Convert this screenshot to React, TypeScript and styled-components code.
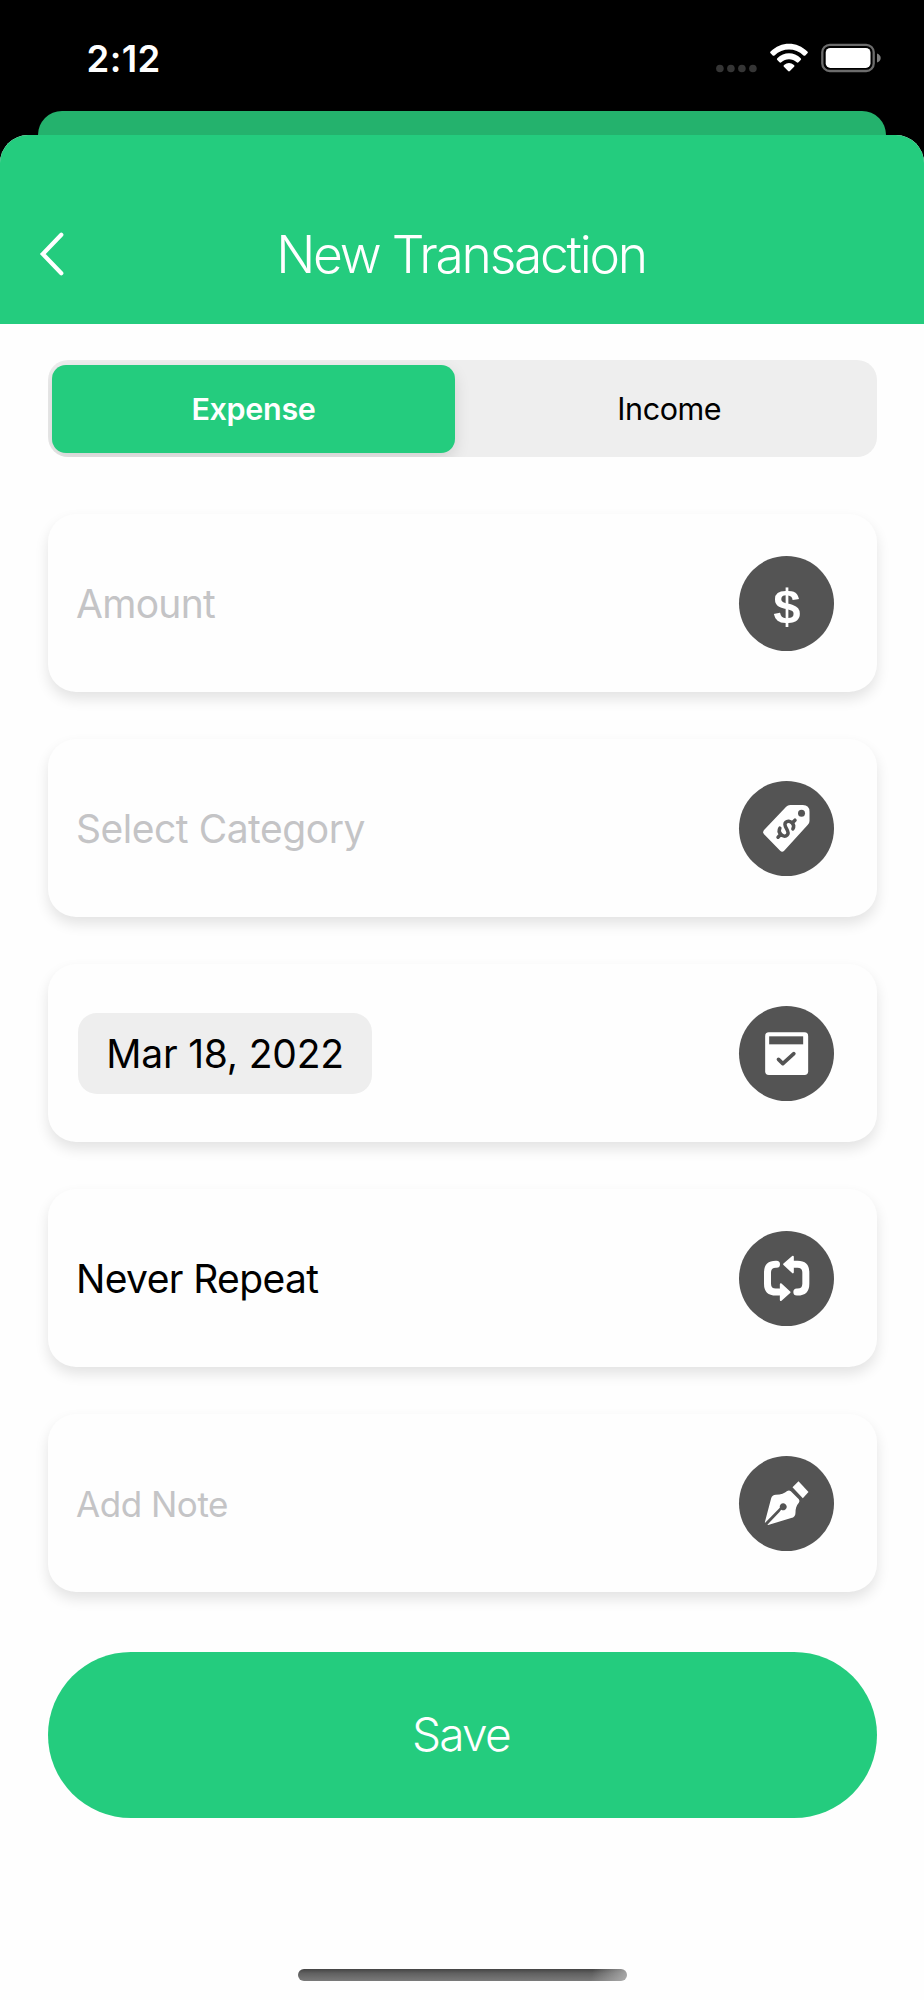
import React from "react";
import styled, { createGlobalStyle } from "styled-components";

const green = "#24cc7e";
const paper = "#fefefe";
const slate = "#545454";

const GlobalStyle = createGlobalStyle`
  *, *::before, *::after { box-sizing: border-box; }
  body { margin: 0; background: #000; }
  button { border: 0; padding: 0; background: none; color: inherit; font: inherit; }
`;

const Screen = styled.div`
  display: flex;
  flex-direction: column;
  width: 924px;
  height: 2000px;
  overflow: hidden;
  background: #000;
  font-family: Inter, "Liberation Sans", sans-serif;
  color: #000;
`;

const StatusBar = styled.div`
  display: flex;
  flex: none;
  align-items: center;
  justify-content: space-between;
  height: 111px;
  padding: 0 43px 0 86.5px;
  color: #fff;
`;

const Clock = styled.time`
  margin-top: 7px;
  font-size: 36.5px;
  font-weight: 600;
  line-height: 44px;
  letter-spacing: 0.4px;
`;

const StatusIcons = styled.div`
  display: flex;
  align-items: center;
  gap: 13px;
  margin-top: 5px;
`;

const BackSheet = styled.div`
  flex: none;
  height: 24px;
  margin: 0 38px;
  border-radius: 24px 24px 0 0;
  background: #24b26d;
`;

const Sheet = styled.main`
  display: flex;
  flex: 1;
  flex-direction: column;
  border-radius: 28px 28px 0 0;
  overflow: hidden;
  background: ${paper};
`;

const Header = styled.header`
  display: grid;
  grid-template-columns: 64px 1fr 64px;
  align-items: center;
  flex: none;
  height: 189px;
  padding: 48px 21px 0 19px;
  background: ${green};
  color: #fff;
`;

const BackButton = styled.button`
  display: flex;
  justify-content: center;
`;

const Title = styled.h1`
  margin: 0;
  font-size: 51.5px;
  font-weight: 300;
  line-height: 64px;
  letter-spacing: -2.25px;
  text-align: center;
`;

const Form = styled.form`
  display: flex;
  flex-direction: column;
  padding: 36px 47.5px 0;
`;

const Segments = styled.div`
  display: grid;
  grid-template-columns: 403px 1fr;
  column-gap: 7px;
  height: 97px;
  padding: 5px 0 4px 4.5px;
  border-radius: 20px;
  overflow: hidden;
  background: #eeeeee;
`;

const Segment = styled.button<{ $active?: boolean }>`
  padding-bottom: 2px;
  border-radius: 14px;
  background: ${(p) => (p.$active ? green : "transparent")};
  box-shadow: ${(p) => (p.$active ? "0 6px 16px rgba(0, 0, 0, 0.12)" : "none")};
  color: ${(p) => (p.$active ? "#fff" : "#000")};
  font-size: 30.5px;
  font-weight: ${(p) => (p.$active ? 600 : 400)};
  letter-spacing: ${(p) => (p.$active ? "-0.32px" : "-0.43px")};
`;

const Fields = styled.div`
  display: flex;
  flex-direction: column;
  gap: 47px;
  margin-top: 57px;
`;

const Card = styled.div`
  display: flex;
  align-items: center;
  justify-content: space-between;
  height: 178px;
  padding: 0 42.5px 0 28.5px;
  border-radius: 28px;
  background: ${paper};
  box-shadow: 0 7px 14px rgba(0, 0, 0, 0.11);
`;

const Label = styled.span<{ $muted?: boolean; $size?: number; $tracking: number }>`
  padding-top: 1px;
  color: ${(p) => (p.$muted ? "#c4c4c6" : "#000")};
  font-size: ${(p) => p.$size ?? 39}px;
  line-height: 48px;
  letter-spacing: ${(p) => p.$tracking}px;
`;

const DateChip = styled.button`
  width: 294px;
  height: 81px;
  margin: 1px 0 0 2px;
  border-radius: 19px;
  background: #eeeeee;
`;

const Badge = styled.span`
  display: flex;
  flex: none;
  align-items: center;
  justify-content: center;
  width: 95px;
  height: 95px;
  border-radius: 50%;
  background: ${slate};
  color: #fff;
`;

const Dollar = styled.span`
  padding: 5px 0 0 1px;
  font-family: "Liberation Sans", Arial, sans-serif;
  font-size: 49px;
  font-weight: 700;
  line-height: 50px;
`;

const SaveButton = styled.button`
  height: 166px;
  margin-top: 60px;
  padding: 0 2px 2px 0;
  border-radius: 83px;
  background: ${green};
  color: #fff;
  font-size: 46px;
  font-weight: 300;
  letter-spacing: -1.7px;
`;

const HomeIndicator = styled.div`
  align-self: center;
  width: 329px;
  height: 12px;
  margin-top: auto;
  margin-bottom: 19px;
  border-radius: 6px;
  background:
    linear-gradient(100deg, transparent 89%, rgba(190, 190, 190, 0.75) 100%),
    linear-gradient(#444, #606060 35%, #7a7a7a);
`;

const SignalDots = () => (
  <svg width="42" height="30" viewBox="0 0 42 30" fill="#353535">
    <circle cx="4.900" cy="25.500" r="3.800" />
    <circle cx="15.900" cy="25.500" r="3.800" />
    <circle cx="26.900" cy="25.500" r="3.800" />
    <circle cx="37.900" cy="25.500" r="3.800" />
  </svg>
);

const Wifi = () => (
  <svg width="38" height="30" viewBox="0 0 38 30" fill="#fff">
    <path d="M.6 8.5C11-2 27-2 37.4 8.5q.9.9 0 1.8L35.3 12.4q-.9.9-1.8 0C25.300 4.500 12.700 4.500 4.500 12.400q-.9.900-1.800 0L.6 10.300q-.9-.900 0-1.800Z" />
    <path d="M7.300 15.200C14 8.700 24 8.700 30.700 15.200q.9.900 0 1.800L28.500 19.200q-.9.900-1.800 0C22.400 15.100 15.600 15.100 11.300 19.200q-.9.900-1.800 0L7.300 17q-.9-.900 0-1.800Z" />
    <path d="M14 21.900Q19 18 24 21.900q1 .900.100 1.800L19.900 28.100q-.900.900-1.800 0L13.900 23.700q-.900-.900.100-1.800Z" />
  </svg>
);

const Battery = () => (
  <svg width="60" height="30" viewBox="0 0 60 30">
    <rect x="1.300" y="1.800" width="51.400" height="26.200" rx="7.500" fill="none" stroke="#6c6c6c" strokeWidth="2.300" />
    <rect x="4.700" y="4.900" width="44.800" height="20" rx="4.600" fill="#fff" />
    <path d="M56 10.500Q59.700 12 59.700 15T56 19.500Z" fill="#7d7d7d" />
  </svg>
);

const Chevron = () => (
  <svg width="26" height="44" viewBox="0 0 26 44" fill="none" stroke="#fff" strokeWidth="4.200" strokeLinecap="round">
    <path d="M23.300 2.800 4.800 22 23.300 41.200" />
  </svg>
);

const Glyph = ({ children }: { children: React.ReactNode }) => (
  <svg width="95" height="95" viewBox="27.500 33 285 285" fill="#fff">
    {children}
  </svg>
);

const TagIcon = () => (
  <Glyph>
    <path d="M181 105H219Q239 105 239 125V153Q239 159 234 164L163 242Q157 248 151 242L102 192Q97 187 102 181L169 110Q174 105 181 105Z" />
    <circle cx="215" cy="130" r="10.500" fill={slate} />
    <path
      transform="translate(170 176) rotate(45)"
      d="M14-13C12-21 7-24 0-24C-9-24-15-19-15-12C-15-4-8-2 0 0C8 2 15 5 15 12C15 20 8 24 0 24C-7 24-13 21-15 13M0-24V-36M0 24V36"
      fill="none"
      stroke={slate}
      strokeWidth="10.500"
      strokeLinecap="round"
    />
  </Glyph>
);

const CalendarIcon = () => (
  <Glyph>
    <rect x="106" y="112" width="129" height="128" rx="11" />
    <rect x="118" y="124" width="102" height="24" fill={slate} />
    <path d="M146 193 159 206 192 176" fill="none" stroke={slate} strokeWidth="11" strokeLinecap="round" strokeLinejoin="round" />
  </Glyph>
);

const RepeatIcon = () => (
  <Glyph>
    <g fill="none" stroke="#fff" strokeWidth="21" strokeLinecap="round">
      <path d="M140 133H138Q113 133 113 158V191Q113 216 138 216H148" />
      <path d="M201 216H203Q228 216 228 191V158Q228 133 203 133H193" />
    </g>
    <path d="M153 193 179 217 153 240ZM189 110 163 133 189 157Z" stroke="#fff" strokeWidth="6" strokeLinejoin="round" />
  </Glyph>
);

const PenIcon = () => (
  <Glyph>
    <path d="M106 228 124 160Q127 149 138 149C154 149 164 145 172 138Q178 134 183 139L207 163Q211 168 207 173C199 182 197 192 197 203Q197 216 184 219L115 240Q112 241 114 238L149 201 154 194A10.500 10.500 0 1 0 150 188L106 233Q104 234 106 228Z" />
    <path d="M206 109 236 141 219 160 188 127Z" />
  </Glyph>
);

export default function App() {
  return (
    <>
      <GlobalStyle />
      <Screen>
        <StatusBar>
          <Clock>2:12</Clock>
          <StatusIcons>
            <SignalDots />
            <Wifi />
            <Battery />
          </StatusIcons>
        </StatusBar>
        <BackSheet />
        <Sheet>
          <Header>
            <BackButton type="button" aria-label="Back">
              <Chevron />
            </BackButton>
            <Title>New Transaction</Title>
          </Header>
          <Form>
            <Segments>
              <Segment type="button" $active>Expense</Segment>
              <Segment type="button">Income</Segment>
            </Segments>
            <Fields>
              <Card>
                <Label $muted $tracking={-0.7}>Amount</Label>
                <Badge><Dollar>$</Dollar></Badge>
              </Card>
              <Card>
                <Label $muted $tracking={-0.47}>Select Category</Label>
                <Badge><TagIcon /></Badge>
              </Card>
              <Card>
                <DateChip type="button">
                  <Label $tracking={-0.2}>Mar 18, 2022</Label>
                </DateChip>
                <Badge><CalendarIcon /></Badge>
              </Card>
              <Card>
                <Label $tracking={-0.62}>Never Repeat</Label>
                <Badge><RepeatIcon /></Badge>
              </Card>
              <Card>
                <Label $muted $size={35} $tracking={-0.47}>Add Note</Label>
                <Badge><PenIcon /></Badge>
              </Card>
            </Fields>
            <SaveButton type="button">Save</SaveButton>
          </Form>
          <HomeIndicator />
        </Sheet>
      </Screen>
    </>
  );
}
